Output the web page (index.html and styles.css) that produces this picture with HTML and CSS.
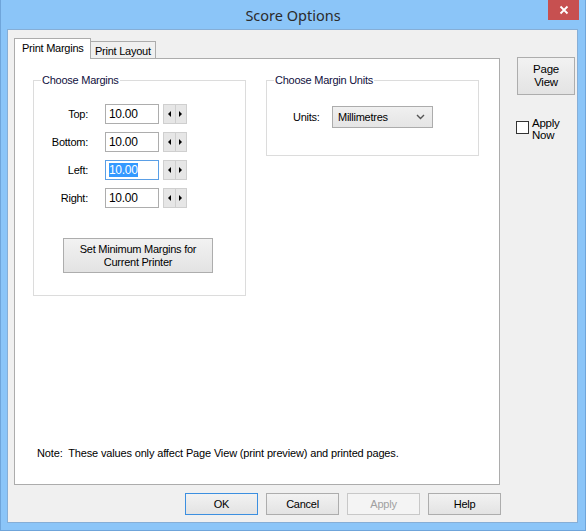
FILE: index.html
```html
<!DOCTYPE html>
<html>
<head>
<meta charset="utf-8">
<link rel="stylesheet" href="styles.css">
</head>
<body>
<div class="window">
  <div class="titlebar">
    <div class="title">Score Options</div>
    <div class="close">
      <svg width="10" height="10" viewBox="0 0 10 10"><path d="M1.5 1.5 L8.5 8.5 M8.5 1.5 L1.5 8.5" stroke="#fff" stroke-width="1.8" fill="none"/></svg>
    </div>
  </div>
  <div class="client">
    <div class="main">
      <div class="tabs-area">
        <div class="tabstrip">
          <div class="tab active">Print Margins</div>
          <div class="tab">Print Layout</div>
        </div>
        <div class="panel">
          <div class="groups">
            <fieldset class="group margins">
              <legend>Choose Margins</legend>
              <div class="fields">
                <span class="lbl">Top:</span>
                <div class="input">10.00</div>
                <div class="spin"><span class="arr left"></span><span class="arr right"></span></div>
                <span class="lbl">Bottom:</span>
                <div class="input">10.00</div>
                <div class="spin"><span class="arr left"></span><span class="arr right"></span></div>
                <span class="lbl">Left:</span>
                <div class="input focus"><span class="sel">10.00</span></div>
                <div class="spin"><span class="arr left"></span><span class="arr right"></span></div>
                <span class="lbl">Right:</span>
                <div class="input">10.00</div>
                <div class="spin"><span class="arr left"></span><span class="arr right"></span></div>
              </div>
              <div class="minwrap">
                <div class="btn minbtn">Set Minimum Margins for<br>Current Printer</div>
              </div>
            </fieldset>
            <fieldset class="group units">
              <legend>Choose Margin Units</legend>
              <div class="unitrow">
                <span class="ulbl">Units:</span>
                <div class="select">
                  <span>Millimetres</span>
                  <svg width="9" height="6" viewBox="0 0 9 6"><path d="M1 1 L4.5 4.5 L8 1" stroke="#555" stroke-width="1.4" fill="none"/></svg>
                </div>
              </div>
            </fieldset>
          </div>
          <p class="note">Note:&nbsp; These values only affect Page View (print preview) and printed pages.</p>
        </div>
      </div>
      <div class="side">
        <div class="btn pageview">Page<br>View</div>
        <div class="check"><span class="box"></span><span class="ctext">Apply<br>Now</span></div>
      </div>
    </div>
    <div class="footer">
      <div class="btn fbtn default">OK</div>
      <div class="btn fbtn">Cancel</div>
      <div class="btn fbtn disabled">Apply</div>
      <div class="btn fbtn">Help</div>
    </div>
  </div>
</div>
</body>
</html>
```
FILE: styles.css
```css
* { box-sizing: border-box; }
html, body { margin: 0; padding: 0; }
body {
  width: 586px;
  height: 531px;
  overflow: hidden;
  font-family: "Liberation Sans", Arial, sans-serif;
  font-size: 11px;
  letter-spacing: -0.25px;
  color: #000;
}
.window {
  width: 586px;
  height: 531px;
  background: #8bc5f8;
  border: 1px solid #6fa5da;
  border-top: 0;
  padding: 0 7px 7px 6px;
  display: flex;
  flex-direction: column;
}
.titlebar {
  height: 29px;
  display: grid;
  grid-template-columns: 1fr auto 1fr;
  flex: none;
}
.title {
  grid-column: 2;
  font-family: "Noto Sans", "Open Sans", sans-serif;
  font-size: 14.5px;
  letter-spacing: 0;
  color: #2b2b2b;
  line-height: 29px;
  padding-top: 1px;
  padding-left: 1px;
}
.close {
  grid-column: 3;
  justify-self: end;
  align-self: start;
  width: 31px;
  height: 20px;
  margin-right: -1px;
  background: #c75050;
  display: flex;
  align-items: center;
  justify-content: center;
}
.client {
  flex: 1;
  background: #f0f0f0;
  border: 1px solid #86aed6;
  display: flex;
  flex-direction: column;
}
.main {
  display: flex;
  padding: 8px 0 0 6px;
}
.tabs-area {
  display: flex;
  flex-direction: column;
  width: 486px;
}
.tabstrip {
  display: flex;
  align-items: flex-end;
  height: 20px;
  position: relative;
  z-index: 1;
}
.tab {
  height: 17px;
  padding: 0 4px 0 4px;
  border: 1px solid #acacac;
  border-bottom: 0;
  background: #f0f0f0;
  line-height: 17px;
  margin-left: -1px;
}
.tab.active {
  height: 21px;
  margin-bottom: -1px;
  margin-left: 0;
  background: #fff;
  width: 77px;
  padding-left: 7px;
  line-height: 18px;
}
.tab:not(.active) {
  width: 66px;
  padding-left: 4px;
  padding-top: 1px;
}
.panel {
  height: 427px;
  background: #fff;
  border: 1px solid #acacac;
  display: flex;
  flex-direction: column;
  padding: 15px 0 0 18px;
}
.groups {
  display: flex;
  gap: 20px;
  align-items: flex-start;
}
.group {
  margin: 0;
  padding: 0;
  width: 213px;
  border: 1px solid #dcdcdc;
  min-width: 0;
}
.group legend {
  margin-left: 7px;
  padding: 0 1px;
  line-height: 13px;
  color: #101040;
}
.fields {
  display: grid;
  grid-template-columns: 55px 70px 28px;
  grid-auto-rows: 20px;
  row-gap: 8px;
  align-items: center;
  margin-top: 17px;
}
.lbl {
  text-align: right;
  padding-right: 1px;
}
.input {
  grid-column: 2;
  margin-left: 16px;
  width: 54px;
  height: 20px;
  border: 1px solid #adadad;
  background: #fff;
  padding: 2px 0 0 3px;
  line-height: 14px;
  font-size: 12px;
  letter-spacing: -0.3px;
}
.input.focus { border-color: #5a9fe6; }
.sel {
  background: #3399ff;
  color: #fff;
  display: inline-block;
  line-height: 14px;
}
.spin {
  margin-left: 4px;
  width: 24px;
  height: 20px;
  display: flex;
  border: 1px solid #cfcfcf;
  background: #cfcfcf;
  gap: 1px;
}
.spin .arr {
  flex: 1;
  background: #e6e6e6;
  display: flex;
  align-items: center;
  justify-content: center;
}
.arr::before {
  content: "";
  width: 0;
  height: 0;
  border-top: 3px solid transparent;
  border-bottom: 3px solid transparent;
}
.arr.left::before { border-right: 3px solid #000; }
.arr.right::before { border-left: 3px solid #000; }
.minwrap {
  margin: 30px 0 22px 29px;
  width: 150px;
}
.btn {
  border: 1px solid #adadad;
  background: linear-gradient(#f2f2f2, #e3e3e3);
  text-align: center;
  display: flex;
  align-items: center;
  justify-content: center;
  line-height: 13px;
}
.minbtn {
  width: 150px;
  height: 35px;
  font-size: 11px;
}
.unitrow {
  display: flex;
  align-items: center;
  margin: 19px 0 27px 26px;
}
.ulbl { width: 39px; }
.select {
  width: 101px;
  height: 22px;
  border: 1px solid #acacac;
  background: linear-gradient(#f0f0f0, #e5e5e5);
  display: flex;
  align-items: center;
  justify-content: space-between;
  padding: 0 7px 0 5px;
}
.note {
  margin: auto 0 24px 4px;
  line-height: 13px;
  letter-spacing: -0.15px;
}
.side {
  display: flex;
  flex-direction: column;
  margin-left: 17px;
  padding-top: 19px;
}
.pageview {
  width: 58px;
  height: 38px;
  font-size: 11.5px;
}
.check {
  display: flex;
  align-items: flex-start;
  margin: 26px 0 0 -1px;
}
.box {
  width: 13px;
  height: 13px;
  border: 1px solid #333;
  background: #fff;
  flex: none;
}
.ctext {
  margin: -4px 0 0 3px;
  line-height: 12px;
  font-size: 11.5px;
}
.footer {
  display: flex;
  justify-content: flex-end;
  gap: 8px;
  width: 493px;
  margin-top: 8px;
}
.fbtn {
  width: 73px;
  height: 22px;
  font-size: 11px;
}
.fbtn.default { border-color: #3c8fe0; }
.fbtn.disabled {
  border-color: #c8c8c8;
  background: #f4f4f4;
  color: #a0a0a0;
}
```
